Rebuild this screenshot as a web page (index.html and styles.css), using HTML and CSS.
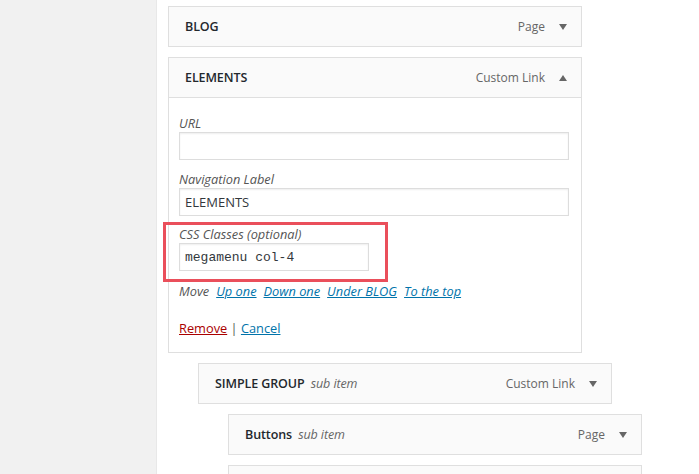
FILE: index.html
```html
<!DOCTYPE html>
<html>
<head>
<meta charset="utf-8">
<link rel="stylesheet" href="styles.css">
</head>
<body>
<div class="page">
  <aside class="sidebar"></aside>
  <main class="main">
    <ul class="menu">
      <li class="item depth-0">
        <div class="bar">
          <span class="title">BLOG</span>
          <span class="type">Page</span>
          <span class="arrow down"></span>
        </div>
      </li>
      <li class="item depth-0 open">
        <div class="bar">
          <span class="title">ELEMENTS</span>
          <span class="type">Custom Link</span>
          <span class="arrow up"></span>
        </div>
        <div class="settings">
          <label class="field">
            <span class="label">URL</span>
            <input class="input wide" type="text" value="">
          </label>
          <label class="field">
            <span class="label">Navigation Label</span>
            <input class="input wide" type="text" value="ELEMENTS">
          </label>
          <div class="highlight">
            <label class="field">
              <span class="label">CSS Classes (optional)</span>
              <input class="input narrow mono" type="text" value="megamenu col-4">
            </label>
          </div>
          <div class="move">
            <span class="move-label">Move</span>
            <a href="#">Up one</a>
            <a href="#">Down one</a>
            <a href="#">Under BLOG</a>
            <a href="#">To the top</a>
          </div>
          <div class="actions">
            <a href="#" class="remove">Remove</a> <span class="sep">|</span> <a href="#">Cancel</a>
          </div>
        </div>
      </li>
      <li class="item depth-1">
        <div class="bar">
          <span class="title">SIMPLE GROUP <em class="sub">sub item</em></span>
          <span class="type">Custom Link</span>
          <span class="arrow down"></span>
        </div>
      </li>
      <li class="item depth-2">
        <div class="bar">
          <span class="title">Buttons <em class="sub">sub item</em></span>
          <span class="type">Page</span>
          <span class="arrow down"></span>
        </div>
      </li>
      <li class="item depth-2">
        <div class="bar">
          <span class="title">&nbsp;</span>
        </div>
      </li>
    </ul>
  </main>
</div>
</body>
</html>
```

FILE: styles.css
```css
* { box-sizing: border-box; }
html, body {
  margin: 0;
  padding: 0;
  height: 100%;
  overflow: hidden;
}
body {
  font-family: "Open Sans", "Noto Sans", sans-serif;
  font-size: 12px;
  color: #23282d;
  background: #fff;
}
.page {
  display: flex;
  height: 474px;
  overflow: hidden;
}
.sidebar {
  width: 157px;
  flex: none;
  background: #f1f1f1;
  border-right: 1px solid #e8e8e8;
}
.main {
  flex: 1;
  padding: 6px 0 0 11px;
  overflow: hidden;
}
.menu {
  list-style: none;
  margin: 0;
  padding: 0;
  display: flex;
  flex-direction: column;
  gap: 10px;
}
.item {
  width: 414px;
}
.depth-1 { margin-left: 30px; }
.depth-2 { margin-left: 60px; }
.bar {
  height: 41px;
  display: flex;
  align-items: center;
  background: #fafafa;
  border: 1px solid #dfdfdf;
  padding: 0 14px 0 16px;
}
.title {
  flex: 1;
  font-weight: 600;
  font-size: 12.5px;
  letter-spacing: -0.1px;
}
.sub {
  font-weight: 400;
  font-style: italic;
  color: #666;
  margin-left: 3px;
}
.type {
  color: #666;
  font-size: 12px;
  margin-right: 14px;
}
.arrow {
  width: 0;
  height: 0;
  border-left: 4px solid transparent;
  border-right: 4px solid transparent;
}
.arrow.down { border-top: 6px solid #666; }
.arrow.up { border-bottom: 6px solid #666; }
.settings {
  border: 1px solid #dfdfdf;
  border-top: none;
  background: #fff;
  padding: 17px 10px 15px 10px;
}
.field {
  display: flex;
  flex-direction: column;
  gap: 1px;
  margin-bottom: 11px;
}
.label {
  font-style: italic;
  color: #555;
  font-size: 12.8px;
  line-height: 16px;
}
.input {
  height: 28px;
  border: 1px solid #ddd;
  box-shadow: inset 0 1px 2px rgba(0,0,0,0.07);
  background: #fff;
  font-family: "Open Sans", "Noto Sans", sans-serif;
  font-size: 13px;
  color: #32373c;
  padding: 0 5px;
  margin: 0;
  outline: none;
}
.input.wide { width: 390px; }
.input.narrow { width: 190px; }
.input.mono {
  font-family: "Liberation Mono", "DejaVu Sans Mono", monospace;
  font-size: 13px;
}
.highlight {
  margin: -5px 0 0 -16px;
  width: 225px;
  height: 60px;
  border: 3px solid #ea4f5b;
  padding: 1px 0 0 13px;
}
.highlight .field { margin-bottom: 0; gap: 1px; }
.move {
  margin-top: 1px;
  display: flex;
  gap: 7px;
  font-size: 12.8px;
  line-height: 17px;
}
.move-label {
  font-style: italic;
  color: #555;
}
.move a {
  color: #0073aa;
  font-style: italic;
  text-decoration: underline;
}
.actions {
  margin-top: 20px;
  font-size: 12.8px;
  line-height: 17px;
}
.actions a {
  color: #0073aa;
  text-decoration: underline;
}
.actions a.remove { color: #a00; }
.sep { color: #555; }
```
